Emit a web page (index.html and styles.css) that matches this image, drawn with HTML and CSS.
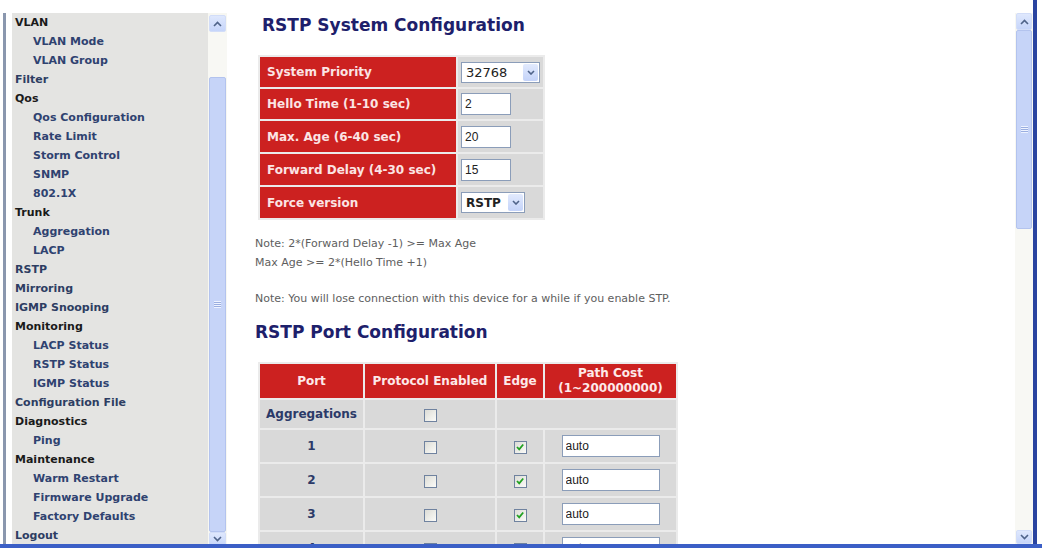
FILE: index.html
```html
<!DOCTYPE html>
<html lang="en">
<head>
<meta charset="utf-8">
<title>RSTP Configuration</title>
<link rel="stylesheet" href="styles.css">
</head>
<body>
<div class="window">
  <div class="menu-frame">
    <ul class="menu">
      <li class="head">VLAN</li>
      <li class="sub">VLAN Mode</li>
      <li class="sub">VLAN Group</li>
      <li class="link">Filter</li>
      <li class="head">Qos</li>
      <li class="sub">Qos Configuration</li>
      <li class="sub">Rate Limit</li>
      <li class="sub">Storm Control</li>
      <li class="sub">SNMP</li>
      <li class="sub">802.1X</li>
      <li class="head">Trunk</li>
      <li class="sub">Aggregation</li>
      <li class="sub">LACP</li>
      <li class="link">RSTP</li>
      <li class="link">Mirroring</li>
      <li class="link">IGMP Snooping</li>
      <li class="head">Monitoring</li>
      <li class="sub">LACP Status</li>
      <li class="sub">RSTP Status</li>
      <li class="sub">IGMP Status</li>
      <li class="link">Configuration File</li>
      <li class="head">Diagnostics</li>
      <li class="sub">Ping</li>
      <li class="head">Maintenance</li>
      <li class="sub">Warm Restart</li>
      <li class="sub">Firmware Upgrade</li>
      <li class="sub">Factory Defaults</li>
      <li class="link">Logout</li>
    </ul>
    <div class="vscroll menu-scroll">
      <div class="sb-btn"><svg width="9" height="6" viewBox="0 0 9 6"><path d="M1 5 L4.5 1.5 L8 5" fill="none" stroke="#4f6389" stroke-width="1.6"/></svg></div>
      <div class="sb-track menu-track-top"></div>
      <div class="sb-thumb menu-thumb"><span class="grip"></span></div>
      <div class="sb-track fill"></div>
      <div class="sb-btn down"><svg width="9" height="6" viewBox="0 0 9 6"><path d="M1 1 L4.5 4.5 L8 1" fill="none" stroke="#4f6389" stroke-width="1.6"/></svg></div>
    </div>
  </div>

  <div class="content-frame">
    <div class="content">
      <h1 class="title">RSTP System Configuration</h1>
      <table class="sys-table">
        <tr>
          <th>System Priority</th>
          <td><div class="select wide"><span class="sel-val">32768</span><span class="sel-btn"><svg width="8" height="5" viewBox="0 0 8 5"><path d="M1 1 L4 4 L7 1" fill="none" stroke="#4f6389" stroke-width="1.6"/></svg></span></div></td>
        </tr>
        <tr>
          <th>Hello Time (1-10 sec)</th>
          <td><input class="field short" type="text" value="2"></td>
        </tr>
        <tr>
          <th>Max. Age (6-40 sec)</th>
          <td><input class="field short" type="text" value="20"></td>
        </tr>
        <tr>
          <th>Forward Delay (4-30 sec)</th>
          <td><input class="field short" type="text" value="15"></td>
        </tr>
        <tr>
          <th>Force version</th>
          <td><div class="select narrow"><span class="sel-val bold">RSTP</span><span class="sel-btn"><svg width="8" height="5" viewBox="0 0 8 5"><path d="M1 1 L4 4 L7 1" fill="none" stroke="#4f6389" stroke-width="1.6"/></svg></span></div></td>
        </tr>
      </table>

      <p class="note first">Note: 2*(Forward Delay -1) &gt;= Max Age<br>Max Age &gt;= 2*(Hello Time +1)</p>
      <p class="note second">Note: You will lose connection with this device for a while if you enable STP.</p>

      <h2 class="title sub-title">RSTP Port Configuration</h2>
      <table class="port-table">
        <tr class="hdr">
          <th class="c-port">Port</th>
          <th class="c-proto">Protocol Enabled</th>
          <th class="c-edge">Edge</th>
          <th class="c-cost">Path Cost<br>(1~200000000)</th>
        </tr>
        <tr class="agg">
          <td class="port-name">Aggregations</td>
          <td><span class="cb"></span></td>
          <td colspan="2"></td>
        </tr>
        <tr class="row">
          <td class="port-num">1</td>
          <td><span class="cb"></span></td>
          <td><span class="cb on"><svg width="10" height="10" viewBox="0 0 10 10"><path d="M2 5 L4.2 7.3 L8.2 2.5" fill="none" stroke="#21a121" stroke-width="1.8"/></svg></span></td>
          <td><input class="field cost" type="text" value="auto"></td>
        </tr>
        <tr class="row">
          <td class="port-num">2</td>
          <td><span class="cb"></span></td>
          <td><span class="cb on"><svg width="10" height="10" viewBox="0 0 10 10"><path d="M2 5 L4.2 7.3 L8.2 2.5" fill="none" stroke="#21a121" stroke-width="1.8"/></svg></span></td>
          <td><input class="field cost" type="text" value="auto"></td>
        </tr>
        <tr class="row">
          <td class="port-num">3</td>
          <td><span class="cb"></span></td>
          <td><span class="cb on"><svg width="10" height="10" viewBox="0 0 10 10"><path d="M2 5 L4.2 7.3 L8.2 2.5" fill="none" stroke="#21a121" stroke-width="1.8"/></svg></span></td>
          <td><input class="field cost" type="text" value="auto"></td>
        </tr>
        <tr class="row">
          <td class="port-num">4</td>
          <td><span class="cb"></span></td>
          <td><span class="cb"></span></td>
          <td><input class="field cost" type="text" value="auto"></td>
        </tr>
      </table>
    </div>
    <div class="vscroll main-scroll">
      <div class="sb-btn"><svg width="9" height="6" viewBox="0 0 9 6"><path d="M1 5 L4.5 1.5 L8 5" fill="none" stroke="#4f6389" stroke-width="1.6"/></svg></div>
      <div class="sb-thumb main-thumb"><span class="grip"></span></div>
      <div class="sb-track fill"></div>
      <div class="sb-btn down"><svg width="9" height="6" viewBox="0 0 9 6"><path d="M1 1 L4.5 4.5 L8 1" fill="none" stroke="#4f6389" stroke-width="1.6"/></svg></div>
    </div>
  </div>
</div>
</body>
</html>
```

FILE: styles.css
```css
html, body {
  margin: 0;
  padding: 0;
  background: #ffffff;
}

body {
  font-family: "DejaVu Sans", Verdana, sans-serif;
}

.window {
  display: flex;
  width: 1042px;
  height: 548px;
  box-sizing: border-box;
  border-bottom: 4px solid #3b5fc6;
  overflow: hidden;
}

/* ---------- left navigation frame ---------- */
.menu-frame {
  display: flex;
  flex: 0 0 215px;
  margin: 13px 0 0 3px;
  padding-left: 6px;
  border-left: 3px solid #8a97ae;
}

.menu {
  flex: 1;
  margin: 0;
  padding: 0 0 0 3px;
  list-style: none;
  background: #e4e4e2;
  font-size: 11px;
  font-weight: bold;
  line-height: 19px;
  color: #2f4270;
  overflow: hidden;
  white-space: nowrap;
}

.menu .head {
  color: #1a1a1a;
}

.menu .link {
  color: #2d3d62;
}

.menu .sub {
  padding-left: 18px;
}

/* ---------- scrollbars ---------- */
.vscroll {
  display: flex;
  flex-direction: column;
  background: #f7f7f2;
  overflow: hidden;
}

.menu-scroll {
  flex: 0 0 19px;
  padding-top: 2px;
}

.main-scroll {
  flex: 0 0 18px;
}

.sb-btn {
  flex: 0 0 17px;
  display: flex;
  align-items: center;
  justify-content: center;
  margin: 0 1px;
  border-radius: 2px;
  background: linear-gradient(#dfe8fd, #c6d5fa);
  border: 1px solid #d2ddf8;
  box-sizing: border-box;
}

.sb-btn.down {
  flex-basis: 14px;
}

.sb-track {
  background: #f8f8f4;
}

.sb-track.fill {
  flex: 1;
}

.menu-track-top {
  flex: 0 0 45px;
}

.sb-thumb {
  display: flex;
  align-items: center;
  justify-content: center;
  margin: 0 1px;
  background: #c6d4f8;
  border: 1px solid #b3c3ee;
  border-radius: 2px;
}

.menu-thumb {
  flex: 0 0 453px;
}

.main-thumb {
  flex: 0 0 197px;
}

.grip {
  width: 7px;
  height: 7px;
  background: repeating-linear-gradient(#eef3ff 0 1px, #9aaee0 1px 2px);
}

/* ---------- right content frame ---------- */
.content-frame {
  display: flex;
  flex: 1;
  margin: 0 5px 0 3px;
  padding-top: 13px;
  border-right: 4px solid #2a44a0;
}

.content {
  flex: 1;
  padding-top: 2px;
  overflow: hidden;
}

.title {
  margin: 0;
  padding-left: 32px;
  font-size: 17px;
  line-height: 20px;
  font-weight: bold;
  color: #1d206b;
}

.sub-title {
  padding-left: 25px;
  margin-top: 14px;
}

/* system settings table */
.sys-table {
  margin: 20px 0 0 28px;
  border-collapse: separate;
  border-spacing: 2px;
  background: #ebebeb;
}

.sys-table th {
  width: 182px;
  height: 30px;
  padding: 0 7px;
  background: #cc2120;
  color: #fbe4e4;
  font-size: 12px;
  font-weight: bold;
  text-align: left;
  white-space: nowrap;
}

.sys-table tr:nth-child(n+3) th,
.sys-table tr:nth-child(n+3) td {
  height: 31px;
}

.sys-table td {
  width: 82px;
  padding: 0 0 0 3px;
  background: #d9d9d9;
}

.field {
  box-sizing: border-box;
  height: 22px;
  margin: 0;
  padding: 0 3px;
  border: 1px solid #8b9db9;
  background: #ffffff;
  color: #222;
  font-family: "Liberation Sans", Arial, sans-serif;
  font-size: 12px;
  vertical-align: middle;
}

.field.short {
  width: 50px;
}

.field.cost {
  width: 98px;
}

.select {
  display: flex;
  align-items: center;
  box-sizing: border-box;
  height: 21px;
  border: 1px solid #8b9db9;
  background: #ffffff;
}

.select.wide {
  width: 79px;
}

.select.narrow {
  width: 64px;
}

.sel-val {
  flex: 1;
  padding-left: 4px;
  font-size: 13px;
  color: #222;
}

.sel-val.bold {
  font-size: 12px;
  font-weight: bold;
}

.sel-btn {
  display: flex;
  align-items: center;
  justify-content: center;
  width: 15px;
  height: 17px;
  margin-right: 1px;
  border-radius: 2px;
  background: linear-gradient(#e2eafd, #c4d3f9);
}

/* notes */
.note {
  margin: 0;
  padding-left: 25px;
  font-size: 11px;
  line-height: 19px;
  color: #5e5e5e;
}

.note.first {
  margin-top: 14px;
}

.note.second {
  margin-top: 17px;
}

/* port table */
.port-table {
  margin: 20px 0 0 28px;
  border-collapse: separate;
  border-spacing: 2px;
  background: #ebebeb;
}

.port-table th {
  height: 34px;
  padding: 0;
  background: #cc2120;
  color: #fde9e9;
  font-size: 12px;
  font-weight: bold;
  line-height: 15px;
  text-align: center;
  white-space: nowrap;
}

.port-table .c-port { width: 103px; }
.port-table .c-proto { width: 130px; }
.port-table .c-edge { width: 46px; }
.port-table .c-cost { width: 131px; }

.port-table td {
  padding: 0;
  background: #d9d9d9;
  text-align: center;
}

.port-table .agg td {
  height: 28px;
}

.port-table .row td {
  height: 32px;
}

.port-name,
.port-num {
  font-size: 12px;
  font-weight: bold;
  color: #2b3a68;
}

.cb {
  display: inline-flex;
  align-items: center;
  justify-content: center;
  box-sizing: border-box;
  width: 13px;
  height: 13px;
  border: 1px solid #6f829f;
  background: linear-gradient(135deg, #dcdcd6, #fbfbf8);
  vertical-align: middle;
}
```
